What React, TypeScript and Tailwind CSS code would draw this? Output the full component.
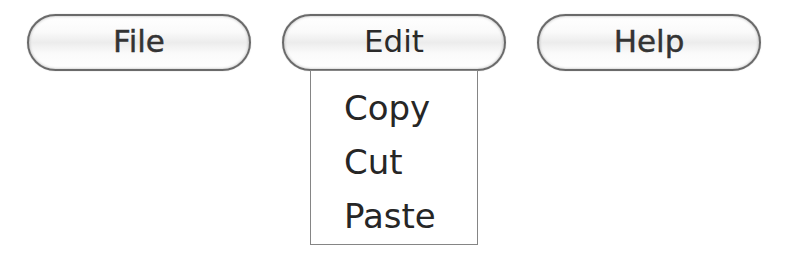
import React from "react";

const font = { fontFamily: '"DejaVu Sans", "Liberation Sans", sans-serif' };

function MenuButton({ label, active }: { label: string; active?: boolean }) {
  return (
    <div
      className={`flex h-[57px] w-[224px] items-center justify-center rounded-full border-2 border-[#6a6a6a] bg-[linear-gradient(to_bottom,#ffffff_0%,#fafafa_30%,#ececec_50%,#fafafa_70%,#ffffff_100%)] pb-[3px] text-[31px] shadow-[inset_0_0_3px_rgba(0,0,0,0.3),0_0_1px_rgba(0,0,0,0.4)] ${
        active ? "text-[#2a2a2a]" : "text-[#333] [-webkit-text-stroke:0.4px_#333]"
      }`}
    >
      {label}
    </div>
  );
}

export default function App() {
  const items = ["Copy", "Cut", "Paste"];

  return (
    <div className="h-[267px] w-[800px] bg-white" style={font}>
      <div className="flex gap-[31px] pl-[27px] pt-[14px]">
        <MenuButton label="File" />
        <div className="relative">
          <MenuButton label="Edit" active />
          {/* dropdown */}
          <div className="absolute left-[28px] top-[56px] flex h-[175px] w-[168px] flex-col border-[1.5px] border-[#858585] bg-white pl-[33px] pt-[10px] text-[34px] leading-[54px] text-[#262626]">
            {items.map((item) => (
              <div key={item}>{item}</div>
            ))}
          </div>
        </div>
        <MenuButton label="Help" />
      </div>
    </div>
  );
}
